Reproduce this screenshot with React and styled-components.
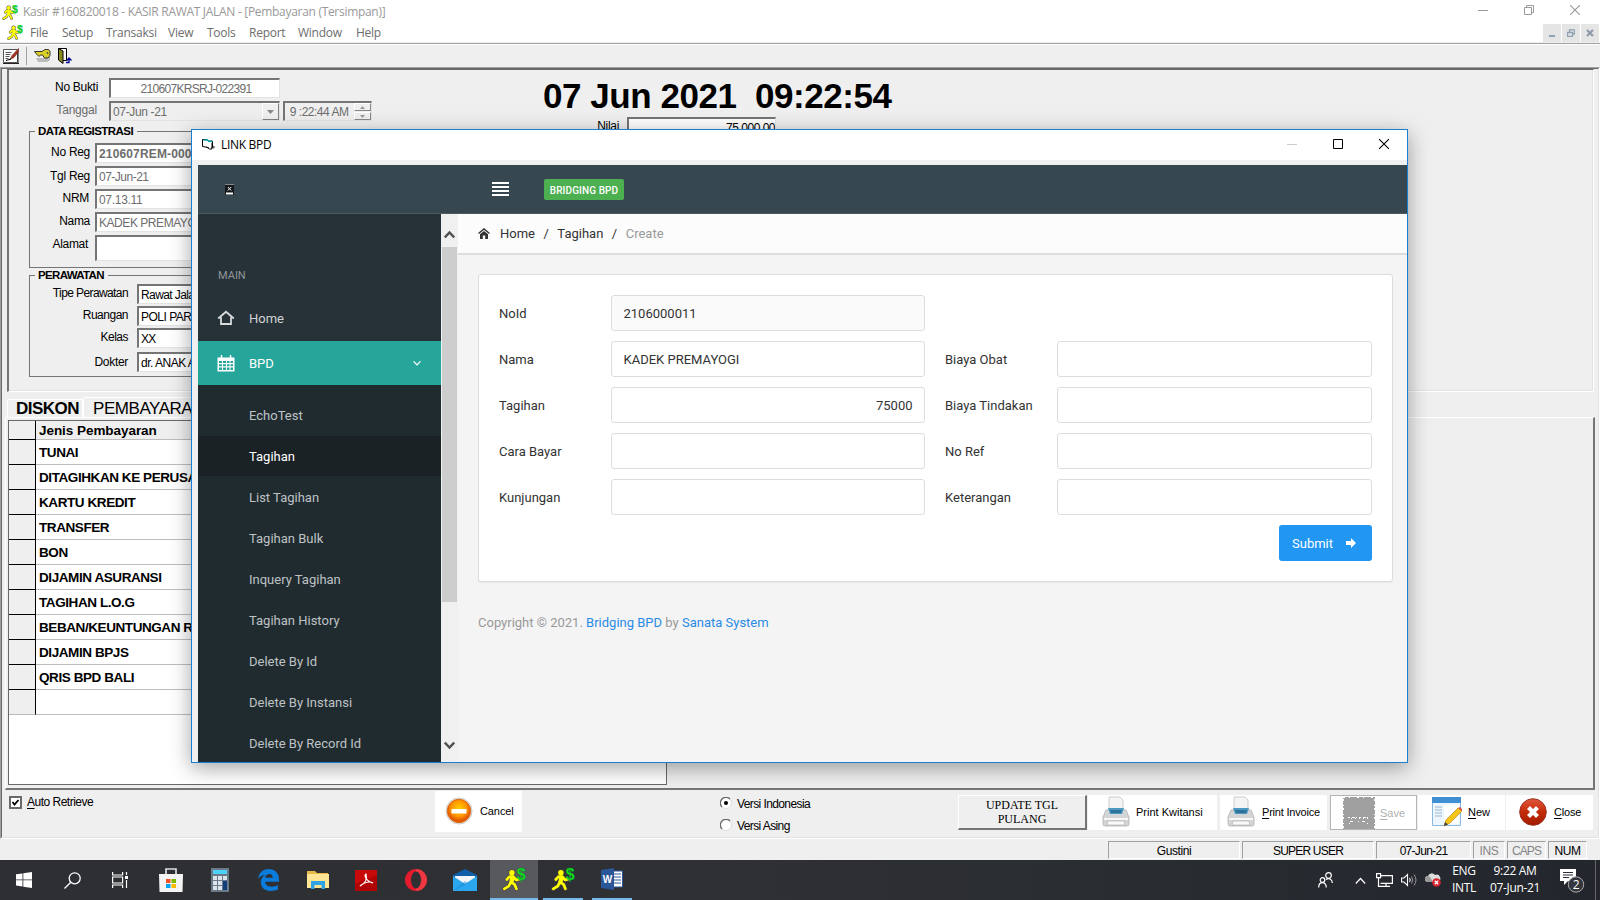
import React from "react";
import styled, { createGlobalStyle } from "styled-components";

const UI = `"Open Sans", "Noto Sans", sans-serif`;
const CLASSIC = `"Liberation Sans", Arial, sans-serif`;
const WEB = `Roboto, "Liberation Sans", sans-serif`;

const Global = createGlobalStyle`
  * { box-sizing: border-box; }
  body { margin: 0; background: #f0f0f0; overflow: hidden; }
  svg { display: block; flex: none; }
`;

const Desktop = styled.div`
  position: relative;
  width: 1600px;
  height: 900px;
  overflow: hidden;
  display: flex;
  flex-direction: column;
  background: #efefef;
  font: 12px ${CLASSIC};
  color: #000;
  white-space: nowrap;
`;

/* ---------- main window chrome ---------- */
const TitleBar = styled.div`
  height: 24px;
  flex: none;
  background: #fff;
  display: flex;
  align-items: center;
  padding: 0 20px 1px 2px;
`;
const TitleText = styled.div`
  font: 12px ${UI};
  letter-spacing: -0.3px;
  color: #999;
  margin-left: 5px;
  flex: 1;
`;
const CaptionButtons = styled.div`
  display: flex;
  gap: ${(p) => p.$gap || 36}px;
  padding-bottom: ${(p) => p.$pb || 0}px;
`;
const MenuBar = styled.div`
  height: 19px;
  flex: none;
  background: #fff;
  border-bottom: 1px solid #f0f0f0;
  display: flex;
  align-items: flex-start;
  padding: 0 1px 0 7px;
`;
const Menus = styled.div`
  display: flex;
  flex: 1;
  padding-left: 7px;
`;
const MenuItem = styled.div`
  width: ${(p) => p.$w}px;
  font: 12px/17px ${UI};
  letter-spacing: -0.25px;
  color: #6d6d6d;
`;
const ChildButtons = styled.div`
  display: flex;
  gap: 1px;
`;
const ChildButton = styled.div`
  width: 18px;
  height: 18px;
  background: #e5e5e5;
  display: grid;
  place-items: center;
`;
const Toolbar = styled.div`
  height: 24px;
  flex: none;
  border-top: 1px solid #a0a0a0;
  box-shadow: inset 0 1px #fff;
  display: flex;
  align-items: center;
  padding: 0 0 0 3px;
`;
const ToolbarDivider = styled.div`
  width: 1px;
  height: 18px;
  background: #a0a0a0;
  margin: 0 7px;
`;
const ToolbarGap = styled.div`
  width: 7px;
`;

const Workspace = styled.div`
  height: 772px;
  flex: none;
  border-style: solid;
  border-width: 1px;
  border-color: #a0a0a0 #fff #fff #a0a0a0;
  display: flex;
`;
const WorkspaceInner = styled.div`
  flex: 1;
  border-style: solid;
  border-width: 1px;
  border-color: #696969 #e3e3e3 #e3e3e3 #696969;
  display: flex;
  flex-direction: column;
`;
const FormPanel = styled.div`
  height: 323px;
  width: 1587px;
  margin-left: 5px;
  border-top: 1px solid #696969;
  border-left: 2px solid #757575;
  border-right: 1px solid #fff;
  border-bottom: 1px solid #fff;
  box-shadow: inset -1px -1px #e3e3e3;
  display: flex;
  flex: none;
`;
const FormColumn = styled.div`
  width: 520px;
  padding: 8px 0 0 20px;
`;
const Row = styled.div`
  display: flex;
  align-items: center;
  margin-top: ${(p) => p.$gap || 0}px;
`;
const Label = styled.label`
  width: ${(p) => p.$w}px;
  margin-right: ${(p) => p.$mr || 0}px;
  padding-bottom: ${(p) => p.$up ?? 2}px;
  text-align: right;
  font-size: 12px;
  line-height: 14px;
  letter-spacing: ${(p) => p.$ls || "-0.3px"};
  color: ${(p) => (p.$muted ? "#6d6d6d" : "#000")};
`;
const Field = styled.div`
  width: ${(p) => p.$w}px;
  height: ${(p) => p.$h || 20}px;
  margin-left: ${(p) => p.$ml || 0}px;
  background: ${(p) => (p.$off ? "#efefef" : "#fff")};
  border-style: solid;
  border-width: 2px 1px 1px 2px;
  border-color: #757575 #e3e3e3 #e3e3e3 #757575;
  display: flex;
  align-items: center;
  justify-content: ${(p) => p.$align || "flex-start"};
  padding-left: 2px;
  overflow: hidden;
  font-size: 12px;
  line-height: 14px;
  letter-spacing: ${(p) => p.$ls || "-0.5px"};
  font-weight: ${(p) => (p.$bold ? 700 : 400)};
  color: ${(p) => (p.$dark ? "#000" : "#6d6d6d")};
`;
const Spacer = styled.div`
  flex: 1;
`;
const DropButton = styled.div`
  width: 17px;
  height: 17px;
  border-style: solid;
  border-width: 1px;
  border-color: #fff #808080 #808080 #fff;
  display: grid;
  place-items: center;
`;
const Spinner = styled.div`
  display: flex;
  flex-direction: column;
  gap: 1px;
`;
const SpinButton = styled.div`
  width: 17px;
  height: 8px;
  border: 1px solid;
  border-color: #fff #888 #888 #fff;
  display: grid;
  place-items: center;
`;
const Group = styled.fieldset`
  margin: ${(p) => p.$gap}px 0 0;
  height: ${(p) => p.$h}px;
  width: 480px;
  min-width: 0;
  padding: 0;
  border: 1px solid #757575;
`;
const GroupTitle = styled.legend`
  margin-left: 5px;
  padding: 0 4px 0 3px;
  font-weight: 700;
  font-size: 11.5px;
  line-height: 14px;
  height: 14px;
  letter-spacing: ${(p) => p.$ls || "-0.55px"};
`;
const ClockColumn = styled.div`
  padding: 5px 0 0 14px;
`;
const Clock = styled.div`
  font-weight: 700;
  font-size: 35px;
  line-height: 42px;
  letter-spacing: -0.45px;
  white-space: pre;
`;

/* ---------- payment tabs ---------- */
const Tabs = styled.div`
  height: 25px;
  flex: none;
  display: flex;
  align-items: flex-end;
  padding-left: 5px;
`;
const Tab = styled.div`
  width: ${(p) => p.$w}px;
  height: ${(p) => (p.$on ? 20 : 18)}px;
  border: 1px solid #fff;
  border-bottom: none;
  border-radius: 2px 2px 0 0;
  padding-left: ${(p) => (p.$on ? 9 : 8)}px;
  font-size: 17px;
  line-height: ${(p) => (p.$on ? 21 : 18)}px;
  font-weight: ${(p) => (p.$bold ? 700 : 400)};
  letter-spacing: ${(p) => (p.$bold ? "-0.5px" : "-0.45px")};
`;
const TabPage = styled.div`
  height: 373px;
  width: 1590px;
  margin-left: 3px;
  flex: none;
  padding: 2px;
  border-style: solid;
  border-width: 1px 2px 2px 1px;
  border-color: #fff #757575 #757575 #fff;
`;
const DataGrid = styled.div`
  width: 659px;
  height: 365px;
  border: 1px solid #696969;
  background: #fff;
`;
const GridRow = styled.div`
  height: ${(p) => (p.$head ? 19 : 25)}px;
  display: flex;
  background: ${(p) => (p.$head ? "#efefef" : "#fff")};
`;
const RowMark = styled.div`
  width: 27px;
  background: #efefef;
  border-right: 1px solid #000;
  border-bottom: 1px solid ${(p) => (p.$last ? "#bbb" : "#000")};
`;
const Cell = styled.div`
  flex: 1;
  border-bottom: 1px solid #bdbdbd;
  padding-left: 3px;
  font-weight: 700;
  font-size: 13.5px;
  letter-spacing: ${(p) => (p.$head ? "-0.05px" : "-0.42px")};
  line-height: ${(p) => (p.$head ? 19 : 25)}px;
`;

/* ---------- bottom action bar ---------- */
const ActionBar = styled.div`
  height: 47px;
  flex: none;
  display: flex;
  align-items: flex-start;
  padding-left: 7px;
`;
const CheckRow = styled.div`
  width: 426px;
  display: flex;
  align-items: center;
  gap: 5px;
  padding-top: 5px;
  letter-spacing: -0.5px;
`;
const CheckBox = styled.div`
  width: 13px;
  height: 13px;
  border: 2px solid #696969;
  background: #fff;
`;
const Radios = styled.div`
  width: 238px;
  margin-left: 198px;
  padding-top: 7px;
  display: flex;
  flex-direction: column;
  gap: 8px;
`;
const RadioRow = styled.div`
  display: flex;
  gap: 5px;
  height: 14px;
  line-height: 15px;
  letter-spacing: -0.6px;
`;
const UpdateButton = styled.div`
  width: 129px;
  height: 35px;
  margin: 5px 1px 0 0;
  border-style: solid;
  border-width: 1px 2px 2px 1px;
  border-color: #fff #757575 #757575 #fff;
  font: 12px/14px "Liberation Serif", serif;
  text-align: center;
  padding-top: 2px;
`;
const ActionButton = styled.div`
  width: ${(p) => p.$w}px;
  height: ${(p) => p.$h || 35}px;
  margin: ${(p) => (p.$h ? 1 : 5)}px ${(p) => p.$mr || 0}px 0 0;
  background: #fff;
  border: 1px solid ${(p) => (p.$off ? "#b5b5b5" : "#fff")};
  color: ${(p) => (p.$off ? "#b0b0b0" : "#000")};
  display: flex;
  align-items: center;
  gap: ${(p) => p.$gap || 6}px;
  padding: 0 0 ${(p) => (p.$off ? 0 : 2)}px ${(p) => p.$pl || 12}px;
  font-size: 11px;
  letter-spacing: ${(p) => p.$ls || "0"};
`;
const Underlined = styled.u`
  text-underline-offset: 2px;
`;
const StatusBar = styled.div`
  height: 21px;
  flex: none;
  display: flex;
  justify-content: flex-end;
  padding: 2px 13px 1px 0;
`;
const StatusCell = styled.div`
  width: ${(p) => p.$w}px;
  margin-left: 2px;
  border-style: solid;
  border-width: 1px;
  border-color: #a0a0a0 #fff #fff #a0a0a0;
  text-align: center;
  line-height: 18px;
  letter-spacing: ${(p) => p.$ls || "-0.4px"};
  color: ${(p) => (p.$off ? "#858585" : "#000")};
`;

/* ---------- taskbar ---------- */
const Taskbar = styled.div`
  height: 40px;
  flex: none;
  background: linear-gradient(90deg, #2d2f34, #2f3033 45%, #292d31 70%, #23262d);
  display: flex;
  color: #fff;
`;
const TaskSlot = styled.div`
  width: ${(p) => p.$w || 49}px;
  height: 40px;
  margin-left: ${(p) => p.$ml || 0}px;
  display: grid;
  place-items: center;
  background: ${(p) => (p.$on ? "#57595c" : "transparent")};
  border-bottom: ${(p) => (p.$run ? "2px solid #76b9ed" : "0")};
`;
const Tray = styled.div`
  margin-left: auto;
  display: flex;
  align-items: center;
  height: 40px;
`;
const TrayIcon = styled.div`
  margin-right: ${(p) => p.$mr}px;
`;
const TrayText = styled.div`
  width: ${(p) => p.$w}px;
  margin-right: ${(p) => p.$mr}px;
  text-align: center;
  font: 12px/17px ${UI};
  letter-spacing: -0.35px;
  padding-bottom: 2px;
`;
const ShowDesktop = styled.div`
  width: 5px;
  height: 40px;
  border-left: 1px solid #666;
`;

/* ---------- Link BPD window ---------- */
const Dialog = styled.div`
  position: absolute;
  left: 191px;
  top: 129px;
  width: 1217px;
  height: 634px;
  border: 1px solid #1a7fd0;
  background: #f0f0f0;
  box-shadow: 0 5px 20px rgba(0, 0, 0, 0.36);
  display: flex;
  flex-direction: column;
`;
const DialogTitle = styled.div`
  height: 30px;
  flex: none;
  background: #fff;
  display: flex;
  align-items: center;
  padding: 0 18px 2px 10px;
`;
const DialogName = styled.div`
  flex: 1;
  margin-left: 5px;
  font: 12px ${UI};
  letter-spacing: -0.3px;
`;
const WebView = styled.div`
  flex: 1;
  margin: 5px 0 0 6px;
  display: flex;
  flex-direction: column;
  min-height: 0;
  font: 13px ${WEB};
  color: #333;
`;
const WebHeader = styled.div`
  height: 49px;
  flex: none;
  background: #37474f;
  border-bottom: 1px solid #4b5a61;
  display: flex;
  align-items: center;
  padding-left: 27px;
`;
const MenuToggle = styled.div`
  margin-left: 258px;
`;
const Badge = styled.div`
  width: 80px;
  height: 21px;
  margin-left: 35px;
  border-radius: 2px;
  background: #4caf50;
  color: #fff;
  font: 500 10px/23px ${WEB};
  letter-spacing: 0.1px;
  text-align: center;
`;
const WebBody = styled.div`
  flex: 1;
  display: flex;
  min-height: 0;
`;
const Sidebar = styled.div`
  width: 243px;
  background: #263238;
  color: #c9ccce;
  overflow: hidden;
`;
const SideHeading = styled.div`
  padding: 54px 0 0 20px;
  font-size: 11px;
  line-height: 15px;
  color: #8f9699;
`;
const SideItem = styled.div`
  height: 44px;
  margin-top: ${(p) => p.$gap || 0}px;
  padding: 0 20px ${(p) => (p.$on ? 0 : 2)}px 19px;
  display: flex;
  align-items: center;
  color: ${(p) => (p.$on ? "#fff" : "#d0d3d5")};
  background: ${(p) => (p.$on ? "#26a69a" : "transparent")};
`;
const SideText = styled.div`
  flex: 1;
  margin-left: 14px;
`;
const SubMenu = styled.div`
  background: #202b30;
  padding: 10px 0;
`;
const SubItem = styled.div`
  height: 40px;
  margin-bottom: 1px;
  padding-left: 51px;
  line-height: 41px;
  color: ${(p) => (p.$on ? "#fff" : "#bfc2c4")};
  background: ${(p) => (p.$on ? "#1b2225" : "transparent")};
`;
const Scrollbar = styled.div`
  width: 17px;
  background: #f0f0f0;
  display: flex;
  flex-direction: column;
  align-items: center;
`;
const ScrollArrow = styled.div`
  height: 33px;
  display: grid;
  place-items: center;
  padding-top: ${(p) => (p.$down ? 0 : 7)}px;
`;
const Thumb = styled.div`
  width: 15px;
  height: 355px;
  background: #cdcdcd;
  margin-bottom: auto;
`;
const Main = styled.div`
  flex: 1;
  background: #f4f4f4;
`;
const Breadcrumb = styled.div`
  height: 41px;
  background: #fcfcfc;
  border-bottom: 2px solid #ddd;
  display: flex;
  align-items: center;
  gap: 8.5px;
  padding-left: 20px;
`;
const Crumb = styled.span`
  margin-left: ${(p) => (p.$first ? 1.5 : 0)}px;
  color: ${(p) => (p.$muted ? "#999" : "#333")};
`;
const Card = styled.div`
  width: 915px;
  height: 308px;
  margin: 19px 0 0 20px;
  background: #fff;
  border: 1px solid #ddd;
  border-radius: 3px;
  box-shadow: 0 1px 1px rgba(0, 0, 0, 0.05);
  padding: 20px;
`;
const FormGrid = styled.div`
  display: grid;
  grid-template-columns: 112px 314px 112px 315px;
  column-gap: 0;
  row-gap: 10px;
  grid-auto-rows: 36px;
`;
const FormLabel = styled.label`
  line-height: 37px;
  grid-column: ${(p) => p.$col};
  margin-left: ${(p) => (p.$second ? 20 : 0)}px;
`;
const FormInput = styled.div`
  border: 1px solid #ddd;
  border-radius: 3px;
  background: ${(p) => (p.$readonly ? "#fafafa" : "#fff")};
  padding: 0 11.5px;
  line-height: 35px;
  text-align: ${(p) => (p.$right ? "right" : "left")};
`;
const SecondInput = styled(FormInput)`
  margin-left: 20px;
  width: 315px;
`;
const Submit = styled.div`
  width: 93px;
  height: 36px;
  margin: 10px 0 0 780px;
  border-radius: 3px;
  background: #2196f3;
  color: #fff;
  display: flex;
  align-items: center;
  justify-content: space-between;
  padding: 0 16px 0 13px;
`;
const Footer = styled.div`
  padding: 32px 0 0 20px;
  line-height: 17px;
  color: #999;
`;
const Link = styled.span`
  color: #2a8be6;
`;

/* ---------- icons ---------- */
const RUN = "M7.600 6.500 6 10 8.500 11.800 9.600 14.500M6 10 4.500 12.800 1.500 14.600M3.200 8.300 5 6.400 7.600 6.500 9.400 8.600 11.300 8.200";
const Runner = ({ s = 16 }) => (
  <svg width={s} height={s} viewBox="0 0 16 16">
    <g fill="none" strokeLinejoin="round" strokeLinecap="round">
      <path d={RUN} stroke="#444" strokeWidth="2.600" />
      <circle cx="6.600" cy="3.800" r="2.200" fill="#444" />
      <path d={RUN} stroke="#ff0" strokeWidth="1.800" />
      <path d="M7 7 6.300 10" stroke="#ff0" strokeWidth="2.800" />
      <circle cx="6.600" cy="3.800" r="1.800" fill="#ff0" />
    </g>
    <text x="9.900" y="8.600" fontFamily="Liberation Sans" fontWeight="700" fontSize="10.500" fill="#12e012" stroke="#084" strokeWidth=".2">$</text>
  </svg>
);
const Minus = ({ c }) => (
  <svg width="10" height="10" viewBox="0 0 10 10"><path d="M0 5.5h10" stroke={c} /></svg>
);
const Cross = ({ c }) => (
  <svg width="10" height="10" viewBox="0 0 10 10"><path d="M0 0l10 10M10 0L0 10" stroke={c} strokeWidth="1.1" /></svg>
);
const Printer = () => (
  <svg width="28" height="31" viewBox="0 0 28 31">
    <path d="M7 1h11l3 3v13H7z" fill="#f4f4f4" stroke="#ccc" />
    <path d="M4 14h20l3 7v7q0 2-2 2H3q-2 0-2-2v-7z" fill="#d3d5d6" stroke="#aaa" strokeWidth=".7" />
    <path d="M6 12h16l-2 6H8z" fill="#4c9ac4" />
    <path d="M8 14h12l-1 3H9z" fill="#2f7399" />
    <path d="M2 22h24v2H2z" fill="#f8f8f8" />
    <path d="M6 25h16l1 4H5z" fill="#fafafa" stroke="#aaa" strokeWidth=".6" />
  </svg>
);
const Disabled = () => (
  <svg width="32" height="32" viewBox="0 0 32 32">
    <path fill="#a0a0a0" d="M0 0h32v32H0z" />
    <path d="M0 .5h32" stroke="#fff" strokeDasharray="2 4 1 7" />
    <path d="M.5 2v30M31.5 2v30" stroke="#fff" strokeDasharray="2 4 1 2" />
    <path d="M5 20.500h22" stroke="#fff" strokeDasharray="2 2 3 1 1 2" />
    <path d="M7 24.500h19" stroke="#fff" strokeDasharray="3 5 1 3" />
    <path d="M8 21.500h18M6 26.500h2M24 26.500h3" stroke="#fff" strokeDasharray="1 3" />
  </svg>
);
const NewDoc = () => (
  <svg width="30" height="31" viewBox="0 0 30 31">
    <path d="M.5 1.5h28v28H.5z" fill="#eef6fd" stroke="#8ab8de" />
    <path d="M0 1h29v6H0z" fill="#3f8fd2" />
    <path d="M3 11h7M3 14h7M3 17h7M3 20h7" stroke="#9ab4cc" />
    <path d="M12 9h15v19H12z" fill="#fff" />
    <path d="M12 30l2-6L26 12l4 3-12 12z" fill="#f5c518" stroke="#b88a10" strokeWidth=".7" />
    <path d="M26 12l2-1 2 2v2z" fill="#d9534f" />
    <path d="M12 30l1-4 3 2.500z" fill="#444" />
  </svg>
);
const CloseRound = () => (
  <svg width="28" height="28" viewBox="0 0 28 28">
    <defs><linearGradient id="cr" x1="0" y1="0" x2="0" y2="1"><stop offset="0" stopColor="#e2583c" /><stop offset=".5" stopColor="#c42a08" /><stop offset="1" stopColor="#a01c00" /></linearGradient></defs>
    <circle cx="14" cy="14" r="13.300" fill="url(#cr)" stroke="#9a3323" />
    <path d="M9.500 9.500l9 9M18.500 9.500l-9 9" stroke="#fff" strokeWidth="4.200" />
  </svg>
);
const CancelRound = () => (
  <svg width="28" height="28" viewBox="0 0 28 28">
    <defs><radialGradient id="cc" cy=".4"><stop offset="0" stopColor="#ffd000" /><stop offset=".65" stopColor="#ff9800" /><stop offset="1" stopColor="#e25b00" /></radialGradient></defs>
    <circle cx="14" cy="14" r="13" fill="#f4f4f4" stroke="#ccc" />
    <circle cx="14" cy="14" r="11.700" fill="url(#cc)" stroke="#d65f00" strokeWidth=".8" />
    <path d="M6.500 12h15v4.500h-15z" fill="#fff" />
  </svg>
);
const Radio = ({ on }) => (
  <svg width="12" height="12" viewBox="0 0 12 12">
    <circle cx="6" cy="6" r="5.500" fill="#fff" stroke="#ddd" />
    <path d="M2 10A5.500 5.500 0 0 1 10 2" fill="none" stroke="#696969" strokeWidth="1.300" />
    {on && <circle cx="6" cy="6" r="2" />}
  </svg>
);

const Chevron = ({ up, w = 11, c = "#505050", sw = 2.4 }) => (
  <svg width={w} height="9" viewBox="0 0 11 9"><path d={up ? "M.8 7.500 5.500 2.500l4.700 5" : "M.8 1.500 5.500 6.500l4.700-5"} fill="none" stroke={c} strokeWidth={sw} /></svg>
);

const payments = ["TUNAI", "DITAGIHKAN KE PERUSAHAAN", "KARTU KREDIT", "TRANSFER", "BON", "DIJAMIN ASURANSI", "TAGIHAN L.O.G", "BEBAN/KEUNTUNGAN RS", "DIJAMIN BPJS", "QRIS BPD BALI", ""];
const menus = [["File", 32], ["Setup", 44], ["Transaksi", 62], ["View", 39], ["Tools", 42], ["Report", 49], ["Window", 58], ["Help", 40]];
const links = ["EchoTest", "Tagihan", "List Tagihan", "Tagihan Bulk", "Inquery Tagihan", "Tagihan History", "Delete By Id", "Delete By Instansi", "Delete By Record Id"];
const billRows = [
  ["Nama", "KADEK PREMAYOGI", "Biaya Obat"],
  ["Tagihan", "75000", "Biaya Tindakan"],
  ["Cara Bayar", "", "No Ref"],
  ["Kunjungan", "", "Keterangan"],
];

function RegistrationForm() {
  return (
    <FormColumn>
      <Row>
        <Label $w={69} $mr={11}>No Bukti</Label>
        <Field $w={171} $align="center" $ls="-0.7px">210607KRSRJ-022391</Field>
      </Row>
      <Row $gap={3}>
        <Label $w={68} $mr={12} $muted $ls="-0.2px">Tanggal</Label>
        <Field $w={171} $off $ls="-0.35px">07-Jun -21<Spacer />
          <DropButton><svg width="7" height="4" viewBox="0 0 7 4"><path d="M0 0h7L3.500 4z" fill="#888" /></svg></DropButton>
        </Field>
        <Field $w={89} $ml={3} $off $ls="-0.5px">&nbsp;9 :22:44 AM<Spacer />
          <Spinner>
            <SpinButton><svg width="5" height="3"><path d="M0 3h5L2.500 0z" fill="#999" /></svg></SpinButton>
            <SpinButton><svg width="5" height="3"><path d="M0 0h5L2.500 3z" fill="#999" /></svg></SpinButton>
          </Spinner>
        </Field>
      </Row>
      <Group $gap={3} $h={144}>
        <GroupTitle>DATA REGISTRASI</GroupTitle>
        <Row $gap={5}><Label $w={60} $mr={5}>No Reg</Label><Field $w={300} $bold $ls="0.15px">210607REM-00012</Field></Row>
        <Row $gap={3}><Label $w={60} $mr={5} $up={0}>Tgl Reg</Label><Field $w={300}>07-Jun-21</Field></Row>
        <Row $gap={3}><Label $w={59} $mr={6}>NRM</Label><Field $w={300} $ls="-0.3px">07.13.11</Field></Row>
        <Row $gap={3}><Label $w={60} $mr={5}>Nama</Label><Field $w={300} $ls="-0.45px">KADEK PREMAYOGI</Field></Row>
        <Row $gap={3}><Label $w={58} $mr={7} $up={8}>Alamat</Label><Field $w={300} $h={26} /></Row>
      </Group>
      <Group $gap={0} $h={109}>
        <GroupTitle $ls="-0.65px">PERAWATAN</GroupTitle>
        <Row $gap={2}><Label $w={98} $mr={9} $up={3} $ls="-0.6px">Tipe Perawatan</Label><Field $dark $w={300} $ls="-0.6px">Rawat Jalan</Field></Row>
        <Row $gap={2}><Label $w={98} $mr={9} $up={3} $ls="-0.5px">Ruangan</Label><Field $dark $w={300}>POLI PARU</Field></Row>
        <Row $gap={2}><Label $w={98} $mr={9} $ls="-0.5px">Kelas</Label><Field $dark $w={300} $ls="-0.8px">XX</Field></Row>
        <Row $gap={4}><Label $w={98} $mr={9} $up={0}>Dokter</Label><Field $dark $w={300} $ls="-0.5px">dr. ANAK AGUNG</Field></Row>
      </Group>
    </FormColumn>
  );
}

function LinkDialog() {
  return (
    <Dialog>
      <DialogTitle>
        <svg width="14" height="12" viewBox="0 0 14 12">
          <path d="M.5 1.500h4l2 1.500h4v6.500H6L.5 8.500z" fill="#fff" stroke="#000" /><path d="M1.500 2h4l1.500 1.500h3.500" stroke="#0aa" fill="none" strokeWidth="1.300" /><path d="M4.500 4.500h5v6h-2.500z" fill="#fff" /><path d="M4.500 9l3 2h2.500v-6" fill="none" stroke="#000" /><path d="M11 7.500l2.500 1.500L11 11z" fill="#777" />
        </svg>
        <DialogName>LINK BPD</DialogName>
        <CaptionButtons $gap={36}>
          <Minus c="#ccc" />
          <svg width="10" height="10"><path d="M.5.5h9v9h-9z" fill="none" stroke="#000" /></svg>
          <Cross c="#000" />
        </CaptionButtons>
      </DialogTitle>
      <WebView>
        <WebHeader>
          <svg width="9" height="11" viewBox="0 0 9 11"><path d="M0 0h9v11H0z" fill="#15191b" /><path d="M0 .5h9" stroke="#888" /><path d="M1 8.500h7v2H1z" fill="#fff" /><path d="M2.800 3l3.400 3.500M6.200 3 2.800 6.500" stroke="#fff" /></svg>
          <MenuToggle><svg width="17" height="14" viewBox="0 0 17 14"><path d="M0 1h17M0 5h17M0 9h17M0 13h17" stroke="#fff" strokeWidth="2" /></svg></MenuToggle>
          <Badge>BRIDGING BPD</Badge>
        </WebHeader>
        <WebBody>
          <Sidebar>
            <SideHeading>MAIN</SideHeading>
            <SideItem $gap={14}>
              <svg width="18" height="16" viewBox="0 0 18 16"><path d="M1.200 8.500 9 1.800l7.800 6.700M4 7.200V14H14V7.200" fill="none" stroke="#d8dadb" strokeWidth="1.800" /></svg>
              <SideText>Home</SideText>
            </SideItem>
            <SideItem $on>
              <svg width="18" height="17" viewBox="0 0 18 17"><path d="M.5 2.500h17v14H.5z" fill="#fff" /><path d="M4.500 0v4M13.500 0v4" stroke="#fff" strokeWidth="1.500" /><g fill="#26a69a"><path d="M2 6h3v2H2zM6 6h3v2H6zM10 6h2.500v2H10zM13.500 6H16v2h-2.500zM2 9.300h3v2H2zM6 9.300h3v2H6zM10 9.300h2.500v2H10zM13.500 9.300H16v2h-2.500zM2 12.600h3v2.400H2zM6 12.600h3v2.400H6zM10 12.600h2.500v2.400H10zM13.500 12.600H16v2.400h-2.500z" /></g></svg>
              <SideText>BPD</SideText>
              <Chevron w={8} c="#fff" sw={1.7} />
            </SideItem>
            <SubMenu>{links.map((l) => <SubItem key={l} $on={l === "Tagihan"}>{l}</SubItem>)}</SubMenu>
          </Sidebar>
          <Scrollbar>
            <ScrollArrow><Chevron up /></ScrollArrow>
            <Thumb />
            <ScrollArrow $down><Chevron /></ScrollArrow>
          </Scrollbar>
          <Main>
            <Breadcrumb>
              <svg width="12" height="11" viewBox="0 0 12 11"><path d="M.5 5.500 6 1l5.500 4.500" fill="none" stroke="#333" strokeWidth="1.400" /><path d="M2 6.200 6 3l4 3.200V11H7.200V7.500H4.800V11H2z" fill="#333" /></svg>
              <Crumb $first>Home</Crumb><Crumb>/</Crumb><Crumb>Tagihan</Crumb><Crumb>/</Crumb><Crumb $muted>Create</Crumb>
            </Breadcrumb>
            <Card>
              <FormGrid>
                <FormLabel>NoId</FormLabel>
                <FormInput $readonly>2106000011</FormInput>
                {billRows.map(([a, v, b]) => (
                  <React.Fragment key={a}>
                    <FormLabel $col={1}>{a}</FormLabel>
                    <FormInput $right={a === "Tagihan"}>{v}</FormInput>
                    <FormLabel $second>{b}</FormLabel>
                    <SecondInput />
                  </React.Fragment>
                ))}
              </FormGrid>
              <Submit>Submit
                <svg width="10" height="10" viewBox="0 0 10 10"><path d="M0 3h5V0l5 5-5 5V7H0z" fill="#fff" /></svg>
              </Submit>
            </Card>
            <Footer>Copyright © 2021. <Link>Bridging BPD</Link> by <Link>Sanata System</Link></Footer>
          </Main>
        </WebBody>
      </WebView>
    </Dialog>
  );
}

function TaskbarRow() {
  return (
    <Taskbar>
      <TaskSlot $w={48}><svg width="16" height="16" viewBox="0 0 16 16"><path fill="#fff" d="M0 2.300 6.500 1.400v6.100H0zM7.300 1.300 16 0v7.500H7.300zM0 8.300h6.500v6.200L0 13.600zM7.300 8.300H16V16l-8.700-1.300z" /></svg></TaskSlot>
      <TaskSlot $w={48}><svg width="17" height="17" viewBox="0 0 17 17"><g fill="none" stroke="#fff" strokeWidth="1.300"><circle cx="10.700" cy="6.300" r="5.500" /><path d="M6.800 10.200.5 16.500" /></g></svg></TaskSlot>
      <TaskSlot $w={48}><svg width="16" height="16" viewBox="0 0 16 16"><g fill="none" stroke="#fff" strokeWidth="1.200"><path d="M.6 0v3h10V0M.6 16v-3h10v3M.6 5h10v6H.6zM14.500 0v3M14.500 8v8" /></g><path fill="#fff" d="M13 4h3v3h-3z" /></svg></TaskSlot>
      <TaskSlot $w={53}><svg width="24" height="24" viewBox="0 0 24 24"><path d="M7 6V1h10v5" fill="none" stroke="#ddd" strokeWidth="1.700" /><path d="M0 6h24l-.5 18H.5z" fill="#f4f4f4" /><path fill="#f25022" d="M7 11h4.500v4H7z" /><path fill="#7fba00" d="M12.500 11H17v4h-4.500z" /><path fill="#00a4ef" d="M7 16h4.500v4H7z" /><path fill="#ffb900" d="M12.500 16H17v4h-4.500z" /></svg></TaskSlot>
      <TaskSlot $w={46}><svg width="18" height="24" viewBox="0 0 18 24"><path fill="#6b7a89" d="M0 0h18v24H0z" /><path fill="#4cd0f5" d="M2 2h14v4H2z" /><path fill="#dce3ea" d="M2 8h4v4H2zM7 8h4v4H7zM12 8h4v4h-4zM2 13h4v4H2zM7 13h4v4H7zM2 18h4v4H2zM7 18h4v4H7z" /><path fill="#123f7c" d="M12 13h4v9h-4z" /></svg></TaskSlot>
      <TaskSlot $w={51}><svg width="21" height="22" viewBox="0 0 21 22"><path fill="#0b7bdc" d="M0 10C1 3 5.500 0 10.800 0 17 0 21 4.300 21 10.200v2.600H7.200c.2 3.500 3 4.900 6.400 4.900 2.500 0 4.600-.7 6.300-1.700v4.600C18 21.600 15.500 22 12.800 22 6.500 22 2.800 18.500 2.800 13.300c0-3.400 1.800-6 4.700-7.300C3.800 6.200 1.200 8 0 10zm7.300-1.300h7.400c0-2.300-1-3.700-3.400-3.700-2.200 0-3.600 1.500-4 3.700z" /></svg></TaskSlot>
      <TaskSlot $w={47}><svg width="22" height="18" viewBox="0 0 22 18"><path fill="#e8b84a" d="M0 0h8l2 2h11v4H0z" /><path fill="#ffe594" d="M0 3h22v14H0z" /><path fill="#2fa3e6" d="M4 10h14v8h-3.500v-4h-7v4H4z" /></svg></TaskSlot>
      <TaskSlot $w={50}><svg width="22" height="21" viewBox="0 0 22 21"><path fill="#c80a0a" d="M0 0h22v21H0z" /><path fill="#900" d="M0 14 22 5v16H0z" opacity=".5" /><path d="M5 16c6-3 7-8 6-12-2 0-1 7 7 9-3-2-9-1-13 3z" fill="none" stroke="#fff" strokeWidth="1.200" /></svg></TaskSlot>
      <TaskSlot $w={49}><svg width="22" height="22" viewBox="0 0 22 22"><circle cx="11" cy="11" r="11" fill="#e31b2d" /><path d="M11 0a11 11 0 0 1 0 22z" fill="#ff5a5a" opacity=".45" /><ellipse cx="11" cy="11" rx="5" ry="8.500" fill="#2e3034" /></svg></TaskSlot>
      <TaskSlot $w={50}><svg width="24" height="22" viewBox="0 0 24 22"><path fill="#0f5ea8" d="M0 6 12 0l12 6v6H0z" /><path fill="#f1f4f8" d="M2 7h20v5l-10 4L2 12z" /><path fill="#2aa7ee" d="M0 7l12 8L24 7v15H0z" /><path fill="#1683cf" d="M0 22 12 12l3 2.500z" opacity=".45" /></svg></TaskSlot>
      <TaskSlot $w={48} $on $run><Runner s={24} /></TaskSlot>
      <TaskSlot $w={40} $ml={5} $run><Runner s={24} /></TaskSlot>
      <TaskSlot $w={40} $ml={9} $run><svg width="22" height="22" viewBox="0 0 22 22"><path fill="#fff" stroke="#2b579a" d="M11 3h10.500v16H11z" /><path d="M13 6h7M13 9h7M13 12h7M13 15h7" stroke="#2b579a" /><path fill="#2b579a" d="M0 2 13 0v22L0 20z" /><text x="1.800" y="15" fill="#fff" fontSize="10" fontWeight="700" fontFamily="Liberation Sans">W</text></svg></TaskSlot>
      <Tray>
        <TrayIcon $mr={21}><svg width="15" height="16" viewBox="0 0 15 16"><g fill="none" stroke="#fff" strokeWidth="1.200"><circle cx="10.500" cy="3.500" r="2.800" /><circle cx="4.500" cy="8" r="2.300" /><path d="M.7 15.500c0-6.500 7.600-6.500 7.600 0M8 7.500c3-2 6-.5 6.400 3.500" /></g></svg></TrayIcon>
        <TrayIcon $mr={9}><Chevron up w={13} c="#fff" sw={1.2} /></TrayIcon>
        <TrayIcon $mr={8}><svg width="17" height="14" viewBox="0 0 17 14"><path d="M5 2.600h11.400v7.800H4.500M6 13.400h8M10 10.500v3M.6.600h4v4h-4zM2.500 5v8.400H6" fill="none" stroke="#fff" strokeWidth="1.200" /></svg></TrayIcon>
        <TrayIcon $mr={8}><svg width="16" height="14" viewBox="0 0 16 14"><path d="M.6 5h2.400l3.500-3.500v11L3 9H.6zM8.500 5q1.500 2 0 4" fill="none" stroke="#fff" strokeWidth="1.100" /><path d="M10.500 3.500q2.600 3.500 0 7M13 1.500q4 5.500 0 11" fill="none" stroke="#999" /></svg></TrayIcon>
        <TrayIcon $mr={10}><svg width="16" height="14" viewBox="0 0 16 14"><path d="M3 9a3 3 0 0 1 0-6 4 4 0 0 1 7-1 3.500 3.500 0 0 1 3 7z" fill="#ddd" /><path d="M0 7a3 3 0 0 1 5-3l3 5H2z" fill="#999" /><circle cx="11.500" cy="9.500" r="4.300" fill="#d8232f" /><path d="M9.800 7.800l3.400 3.400M13.200 7.800l-3.400 3.400" stroke="#fff" strokeWidth="1.300" /></svg></TrayIcon>
        <TrayText $w={26} $mr={11}>ENG<br />INTL</TrayText>
        <TrayText $w={54} $mr={18}>9:22 AM<br />07-Jun-21</TrayText>
        <TrayIcon $mr={10}><svg width="25" height="26" viewBox="0 0 25 26"><path fill="#fff" d="M0 2h16v12H8l-4 4v-4H0z" /><path d="M3 5.500h10M3 8h10M3 10.500h6" stroke="#2a2d33" /><circle cx="16" cy="17.500" r="7.700" fill="#33363c" stroke="#aaa" /><text x="12.800" y="21.800" fill="#fff" fontSize="12" fontFamily="Open Sans">2</text></svg></TrayIcon>
        <ShowDesktop />
      </Tray>
    </Taskbar>
  );
}

export default function App() {
  return (
    <Desktop>
      <Global />
      <TitleBar>
        <Runner />
        <TitleText>Kasir #160820018 - KASIR RAWAT JALAN - [Pembayaran (Tersimpan)]</TitleText>
        <CaptionButtons $pb={3}>
          <Minus c="#999" />
          <svg width="10" height="10"><path d="M.5 2.500h7v7h-7zM2.500 2.500v-2h7v7h-2" fill="none" stroke="#999" /></svg>
          <Cross c="#999" />
        </CaptionButtons>
      </TitleBar>
      <MenuBar>
        <Runner />
        <Menus>{menus.map(([m, w]) => <MenuItem key={m} $w={w}>{m}</MenuItem>)}</Menus>
        <ChildButtons>
          <ChildButton><svg width="8" height="8"><path d="M1 7h6" stroke="#8fa0b5" strokeWidth="2" /></svg></ChildButton>
          <ChildButton><svg width="8" height="8"><path d="M.5 3.500h5v4h-5zM2.500 3V.8h5V5H6" fill="none" stroke="#8fa0b5" strokeWidth="1.300" /></svg></ChildButton>
          <ChildButton><svg width="8" height="8"><path d="M1 1l6 6M7 1 1 7" stroke="#8e9aab" strokeWidth="2.200" /></svg></ChildButton>
        </ChildButtons>
      </MenuBar>
      <Toolbar>
        <svg width="16" height="16" viewBox="0 0 16 16"><path d="M.5 1.500h14v13H.5z" fill="#fff" stroke="#555" /><path d="M0 15.500h16M15 3v12" stroke="#222" /><path d="M2.500 4.500h6M2.500 6.500h5M2.500 8.500h4M2.500 10.500h3" stroke="#555" /><path d="M15.500.5 9 7.500l-2 4 4-2 4.800-6z" fill="#a53420" stroke="#5b2218" strokeWidth=".5" /><path d="M3 12.500l5-1.500" stroke="#000" /></svg>
        <ToolbarDivider />
        <svg width="17" height="14" viewBox="0 0 17 14"><path d="M2 9h10l4-2v4l-3 2H4z" fill="#bbb" /><path d="M.5 2.500H8l3-2h3.500l1.500 2v4l-2 2.500h-3.500L8.500 6H6.500L5 7.500 3.500 6 2.500 5z" fill="#d9cf28" stroke="#222" strokeWidth=".9" /><path d="M13 3l1 2" stroke="#333" /></svg>
        <ToolbarGap />
        <svg width="14" height="16" viewBox="0 0 14 16"><path d="M.5.500h8v12h-4" fill="#fff" stroke="#000" /><path d="M.5.500 5 3v12.500L.5 12z" fill="#888a20" stroke="#000" /><path d="M8 14.500h3v-4M9 12.500l2-2.500 2.500 2.500" stroke="#000090" fill="none" strokeWidth="1.300" /></svg>
      </Toolbar>
      <Workspace>
        <WorkspaceInner>
          <FormPanel>
            <RegistrationForm />
            <ClockColumn>
              <Clock>{"07 Jun 2021  09:22:54"}</Clock>
              <Row>
                <Label $w={76} $mr={8}>Nilai</Label>
                <Field $w={149} $dark $align="flex-end" $ls="-0.5px">75.000.00</Field>
              </Row>
            </ClockColumn>
          </FormPanel>
          <Tabs>
            <Tab $w={76} $bold>DISKON</Tab>
            <Tab $w={130} $on>PEMBAYARAN</Tab>
          </Tabs>
          <TabPage>
            <DataGrid>
              <GridRow $head><RowMark /><Cell $head>Jenis Pembayaran</Cell></GridRow>
              {payments.map((p, i) => (
                <GridRow key={i}><RowMark $last={i === payments.length - 1} /><Cell>{p}</Cell></GridRow>
              ))}
            </DataGrid>
          </TabPage>
          <ActionBar>
            <CheckRow>
              <CheckBox><svg width="9" height="9" viewBox="0 0 9 9"><path d="M1.500 4 3.500 6.500 7.500 2" fill="none" stroke="#000" strokeWidth="1.800" /></svg></CheckBox>
              <span><Underlined>A</Underlined>uto Retrieve</span>
            </CheckRow>
            <ActionButton $w={87} $h={41} $pl={9} $gap={7} $ls="-0.1px"><CancelRound />Cancel</ActionButton>
            <Radios>
              <RadioRow><Radio on />Versi Indonesia</RadioRow>
              <RadioRow><Radio />Versi Asing</RadioRow>
            </Radios>
            <UpdateButton>UPDATE TGL<br />PULANG</UpdateButton>
            <ActionButton $w={129} $mr={3} $pl={13}><Printer />Print Kwitansi</ActionButton>
            <ActionButton $w={107} $mr={3} $pl={6} $gap={7} $ls="-0.2px"><Printer /><span><Underlined>P</Underlined>rint Invoice</span></ActionButton>
            <ActionButton $w={87} $mr={1} $off $gap={5}><Disabled /><span><Underlined>S</Underlined>ave</span></ActionButton>
            <ActionButton $w={87} $mr={1} $pl={13}><NewDoc /><span><Underlined>N</Underlined>ew</span></ActionButton>
            <ActionButton $w={87} $gap={7} $ls="-0.2px"><CloseRound /><span><Underlined>C</Underlined>lose</span></ActionButton>
          </ActionBar>
        </WorkspaceInner>
      </Workspace>
      <StatusBar>
        <StatusCell $w={132}>Gustini</StatusCell>
        <StatusCell $w={132} $ls="-0.8px">SUPER USER</StatusCell>
        <StatusCell $w={95} $ls="-0.7px">07-Jun-21</StatusCell>
        <StatusCell $w={32} $off>INS</StatusCell>
        <StatusCell $w={39} $off $ls="-0.9px">CAPS</StatusCell>
        <StatusCell $w={39}>NUM</StatusCell>
      </StatusBar>
      <TaskbarRow />
      <LinkDialog />
    </Desktop>
  );
}
